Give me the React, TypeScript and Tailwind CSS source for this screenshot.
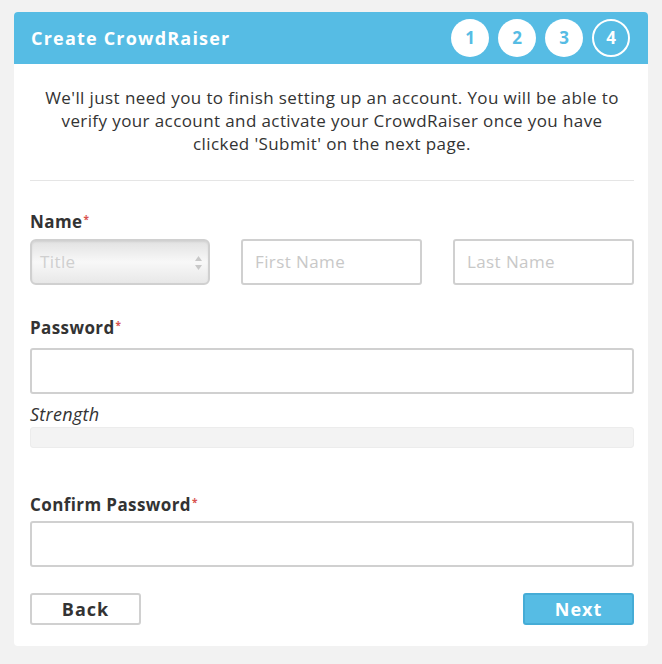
import React from "react";

const Req = () => <sup className="text-[#d9534f] text-[10px] relative -top-[5px] ml-[1px]">*</sup>;

export default function App() {
  return (
    <div className="min-h-[664px] w-[662px] bg-[#f2f2f2] pt-[12px] pl-[14px]" style={{ fontFamily: '"Open Sans", sans-serif' }}>
      <div className="w-[634px] h-[634px] bg-white rounded-[4px] overflow-hidden flex flex-col">
        <div className="h-[52px] bg-[#56bce4] flex items-center justify-between pl-[17px] pr-[18px]">
          <div className="text-white text-[18px] font-bold tracking-[1.2px]">Create CrowdRaiser</div>
          <div className="flex gap-[9px]">
            {["1", "2", "3"].map((n) => (
              <div key={n} className="w-[38px] h-[38px] rounded-full bg-white text-[#56bce4] font-bold text-[17px] flex items-center justify-center">{n}</div>
            ))}
            <div className="w-[38px] h-[38px] rounded-full border-2 border-white text-white font-bold text-[17px] flex items-center justify-center">4</div>
          </div>
        </div>
        <div className="pl-[16px] pr-[14px] flex flex-col">
          <p className="text-center text-[17px] tracking-[0.4px] leading-[23px] text-[#333] px-[12px] pt-[22px] pb-[25px]">
            We'll just need you to finish setting up an account. You will be able to verify your account and activate your CrowdRaiser once you have clicked 'Submit' on the next page.
          </p>
          <div className="h-px bg-[#e5e5e5]" />
          <div className="mt-[31px] text-[17px] tracking-[0.4px] font-bold text-[#333] leading-[20px]">Name<Req /></div>
          <div className="mt-[7px] flex justify-between">
            <div className="relative w-[180px] h-[46px] rounded-[6px] border-2 border-[#d0d0d0] bg-gradient-to-b from-[#e2e2e2] via-[#f8f8f8] to-[#e8e8e8] shadow-[inset_0_1px_2px_rgba(0,0,0,0.08)] flex items-center pl-[8px]">
              <span className="text-[17px] tracking-[0.4px] text-[#cfcfcf]">Title</span>
              <svg className="absolute right-[5px] top-[14px]" width="9" height="16" viewBox="0 0 9 16">
                <path d="M4.5 1 L8 6 L1 6 Z" fill="#c8c8c8" />
                <path d="M4.5 15 L8 10 L1 10 Z" fill="#c8c8c8" />
              </svg>
            </div>
            <div className="w-[181px] h-[46px] rounded-[3px] border-2 border-[#d0d0d0] flex items-center pl-[12px] text-[17px] tracking-[0.4px] text-[#c8c8c8]">First Name</div>
            <div className="w-[181px] h-[46px] rounded-[3px] border-2 border-[#d0d0d0] flex items-center pl-[12px] text-[17px] tracking-[0.4px] text-[#c8c8c8]">Last Name</div>
          </div>
          <div className="mt-[33px] text-[17px] tracking-[0.4px] font-bold text-[#333] leading-[20px]">Password<Req /></div>
          <div className="mt-[10px] h-[46px] rounded-[3px] border-2 border-[#d0d0d0]" />
          <div className="mt-[9px] text-[18px] italic tracking-[0.3px] text-[#333] leading-[22px]">Strength</div>
          <div className="mt-[2px] h-[21px] rounded-[3px] bg-[#f3f3f3] border border-[#ececec]" />
          <div className="mt-[47px] text-[17px] tracking-[0.4px] font-bold text-[#333] leading-[20px]">Confirm Password<Req /></div>
          <div className="mt-[6px] h-[46px] rounded-[3px] border-2 border-[#d0d0d0]" />
          <div className="mt-[26px] flex justify-between">
            <div className="w-[111px] h-[32px] rounded-[3px] border-2 border-[#d0d0d0] flex items-center justify-center text-[18px] font-bold text-[#333] tracking-[1px]">Back</div>
            <div className="w-[111px] h-[32px] rounded-[3px] border-2 border-[#45acd6] bg-[#56bce4] flex items-center justify-center text-[18px] font-bold text-white tracking-[1px]">Next</div>
          </div>
        </div>
      </div>
    </div>
  );
}
